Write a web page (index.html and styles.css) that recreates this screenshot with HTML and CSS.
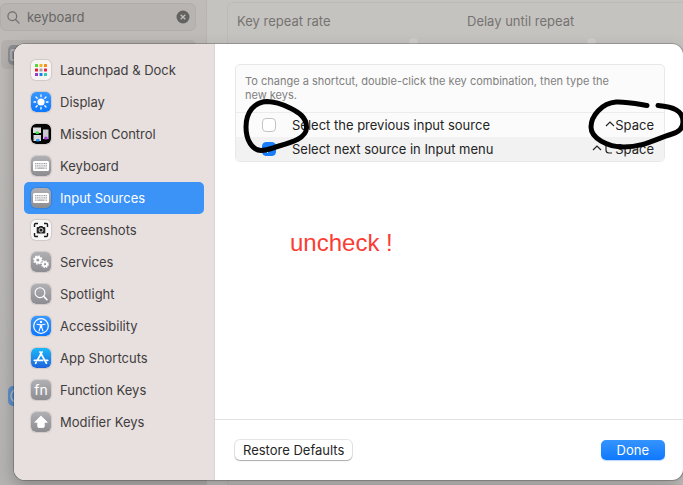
FILE: index.html
```html
<!DOCTYPE html>
<html lang="en">
<head>
<meta charset="utf-8">
<title>Keyboard Shortcuts</title>
<link rel="stylesheet" href="styles.css">
</head>
<body>
<div class="window">
  <aside class="back-side">
    <div class="search">
      <svg class="search-glass" viewBox="0 0 14 14" aria-hidden="true"><circle cx="5.7" cy="5.7" r="4.7"/><path d="M9.2 9.2 13 13"/></svg>
      <input class="search-field" type="text" value="keyboard" aria-label="Search">
      <button class="search-clear" type="button" aria-label="Clear search">
        <svg viewBox="0 0 14 14" aria-hidden="true"><circle cx="7" cy="7" r="6.5"/><path d="M4.7 4.7l4.6 4.6M9.3 4.7 4.7 9.3"/></svg>
      </button>
    </div>
    <div class="back-row"><svg class="back-icon" viewBox="0 0 20 20" aria-hidden="true"><rect class="dim-gray" width="20" height="20" rx="5"/><rect class="dim-line" x="3" y="5" width="14" height="10" rx="1"/></svg></div>
    <div class="back-other"><svg class="back-icon" viewBox="0 0 20 20" aria-hidden="true"><rect class="dim-blue" width="20" height="20" rx="5"/><circle class="dim-line" cx="10" cy="10" r="7"/></svg></div>
  </aside>
  <div class="back-main">
    <div class="back-card">
      <div class="rate"><span>Key repeat rate</span><i class="knob"></i></div>
      <div class="rate"><span>Delay until repeat</span><i class="knob"></i></div>
    </div>
  </div>

  <section class="sheet" role="dialog" aria-label="Keyboard shortcuts">
    <nav class="nav">
      <a class="nav-item" href="#launchpad">
        <svg class="icon" viewBox="0 0 20 20" aria-hidden="true"><rect width="20" height="20" rx="5" fill="#f7f5f3"/>
          <rect x="4" y="4" width="3" height="3" rx=".6" fill="#52d63c"/><rect x="8.5" y="4" width="3" height="3" rx=".6" fill="#f4b51c"/><rect x="13" y="4" width="3" height="3" rx=".6" fill="#f58a1f"/>
          <rect x="4" y="8.5" width="3" height="3" rx=".6" fill="#e5202e"/><rect x="8.5" y="8.5" width="3" height="3" rx=".6" fill="#a5a5a5"/><rect x="13" y="8.5" width="3" height="3" rx=".6" fill="#ed1f50"/>
          <rect x="4" y="13" width="3" height="3" rx=".6" fill="#9b35cf"/><rect x="8.5" y="13" width="3" height="3" rx=".6" fill="#187ff0"/><rect x="13" y="13" width="3" height="3" rx=".6" fill="#32c9ad"/></svg>
        Launchpad &amp; Dock</a>
      <a class="nav-item" href="#display">
        <svg class="icon" viewBox="0 0 20 20" aria-hidden="true"><rect width="20" height="20" rx="5" fill="url(#blue)"/><circle cx="10" cy="10" r="3.6" fill="#fff"/>
          <path d="M10 3v1.6M10 15.4V17M3 10h1.6M15.4 10H17M5 5l1.2 1.2M13.8 13.8 15 15M5 15l1.2-1.2M13.8 6.2 15 5" stroke="#fff" stroke-width="1.3" stroke-linecap="round"/></svg>
        Display</a>
      <a class="nav-item" href="#mission">
        <svg class="icon" viewBox="0 0 20 20" aria-hidden="true"><rect width="20" height="20" rx="5" fill="#050505"/>
          <rect x="2" y="3.5" width="8" height="5.5" fill="#dcdcdc"/><rect x="2.5" y="11" width="7.5" height="6" fill="#d8d8dc"/><rect x="12" y="5.5" width="5.5" height="9.5" fill="#c9c5cc"/>
          <rect x="4.5" y="7.5" width="3.5" height="2.5" rx="1" fill="#37e83b"/><rect x="5" y="15" width="3.5" height="2.6" rx="1" fill="#279cfa"/><rect x="13.2" y="12.8" width="3.4" height="2.6" rx="1" fill="#a43bd8"/></svg>
        Mission Control</a>
      <a class="nav-item" href="#keyboard">
        <svg class="icon" viewBox="0 0 20 20" aria-hidden="true"><rect width="20" height="20" rx="5" fill="url(#gray)"/><use href="#keys"/></svg>
        Keyboard</a>
      <a class="nav-item selected" href="#input" aria-current="page">
        <svg class="icon" viewBox="0 0 20 20" aria-hidden="true"><rect width="20" height="20" rx="5" fill="url(#gray)"/><use href="#keys"/></svg>
        Input Sources</a>
      <a class="nav-item" href="#screenshots">
        <svg class="icon" viewBox="0 0 20 20" aria-hidden="true"><rect width="20" height="20" rx="5" fill="#f8f8f8"/>
          <path d="M3.5 7V4.5a1 1 0 0 1 1-1H7M13 3.5h2.5a1 1 0 0 1 1 1V7M16.5 13v2.5a1 1 0 0 1-1 1H13M7 16.5H4.5a1 1 0 0 1-1-1V13" fill="none" stroke="#1d1d1d" stroke-width="1.4"/>
          <path d="M6.5 7h1.4l.7-1h2.8l.7 1h1.4q.8 0 .8.8v4.9q0 .8-.8.8h-7q-.8 0-.8-.8V7.8q0-.8.8-.8z" fill="#222"/><circle cx="10" cy="10.1" r="2" fill="#222" stroke="#e6e6e6" stroke-width=".9"/></svg>
        Screenshots</a>
      <a class="nav-item" href="#services">
        <svg class="icon" viewBox="0 0 20 20" aria-hidden="true"><rect width="20" height="20" rx="5" fill="url(#gray)"/>
          <g fill="none" stroke="#fff"><circle cx="6.8" cy="8" r="2.6" stroke-width="2.1"/><circle cx="6.8" cy="8" r="4" stroke-width="1.4" stroke-dasharray="1.57 1.57"/>
          <circle cx="14" cy="12.2" r="2.1" stroke-width="1.9"/><circle cx="14" cy="12.2" r="3.3" stroke-width="1.3" stroke-dasharray="1.3 1.3"/></g></svg>
        Services</a>
      <a class="nav-item" href="#spotlight">
        <svg class="icon" viewBox="0 0 20 20" aria-hidden="true"><rect width="20" height="20" rx="5" fill="url(#gray)"/><g fill="none" stroke="#fff" stroke-linecap="round"><circle cx="9" cy="8.7" r="4.9" stroke-width="1.1"/><path d="M12.7 12.4 16 15.7" stroke-width="1.5"/></g></svg>
        Spotlight</a>
      <a class="nav-item" href="#accessibility">
        <svg class="icon" viewBox="0 0 20 20" aria-hidden="true"><rect width="20" height="20" rx="5" fill="url(#blue)"/><circle cx="10" cy="10" r="7.3" fill="none" stroke="#fff" stroke-width="1.2"/><circle cx="10" cy="5.9" r="1.2" fill="#fff"/>
          <path d="M6 8.2l3 .5h2l3-.5M9.3 8.7v2.8L8 15M10.7 8.7v2.8L12 15M10 8.5v3" fill="none" stroke="#fff" stroke-width="1.1" stroke-linecap="round"/></svg>
        Accessibility</a>
      <a class="nav-item" href="#apps">
        <svg class="icon" viewBox="0 0 20 20" aria-hidden="true"><rect width="20" height="20" rx="5" fill="url(#store)"/><path d="M11.1 4 6.3 12.3M9 4l5.8 10.2M3.3 12.3h8.4M14 12.3h2.7M5.2 14.3l-.6 1M14.8 14.2l.6 1" fill="none" stroke="#fff" stroke-width="1.7" stroke-linecap="round"/></svg>
        App Shortcuts</a>
      <a class="nav-item" href="#function">
        <span class="icon fn" aria-hidden="true">fn</span>
        Function Keys</a>
      <a class="nav-item" href="#modifier">
        <svg class="icon" viewBox="0 0 20 20" aria-hidden="true"><rect width="20" height="20" rx="5" fill="url(#gray)"/><path d="M10 3.9 16.3 10.3h-3v4.2q0 1-1 1H7.7q-1 0-1-1v-4.2h-3z" fill="#fff" stroke="#fff" stroke-width=".8" stroke-linejoin="round"/></svg>
        Modifier Keys</a>
    </nav>

    <div class="pane">
      <div class="content">
        <div class="card">
          <p class="hint">To change a shortcut, double-click the key combination, then type the new keys.</p>
          <table class="shortcuts">
            <tr>
              <td class="tick"><input type="checkbox" id="prev"></td>
              <td><label for="prev">Select the previous input source</label></td>
              <td class="combo"><svg class="ctrl" viewBox="0 0 10 10" aria-hidden="true"><path d="M1 6 5 2l4 4"/></svg>Space</td>
            </tr>
            <tr>
              <td class="tick"><input type="checkbox" id="next" checked></td>
              <td><label for="next">Select next source in Input menu</label></td>
              <td class="combo"><svg class="ctrl" viewBox="0 0 10 10" aria-hidden="true"><path d="M1 6 5 2l4 4"/></svg><svg class="opt" viewBox="0 0 10 10" aria-hidden="true"><path d="M1 2v4q0 3 3 3h3"/></svg>Space</td>
            </tr>
          </table>
          <svg class="ink ink-left" viewBox="0 0 75 60" aria-hidden="true"><path d="M27 6.5C14 7 6 17 6 32c0 13 6 23 15 23.5 7 0 10-2 18-4.5 14-4 27-8 27.5-18C67 22 58 17 50 13 42 9 35 6.5 27 6.5z"/></svg>
          <svg class="ink ink-right" viewBox="0 0 100 60" aria-hidden="true"><path d="M64 10.5C55 9 43 6.5 33 7 19 8 8 21 8 32c0 11 16 20 33 20 20 0 31-8 48-13 7-2 11-6 11-12 0-12-10-15-25-16.5"/></svg>
        </div>
        <p class="note">uncheck !</p>
      </div>
      <footer class="actions">
        <button class="btn" type="button">Restore Defaults</button>
        <button class="btn primary" type="button">Done</button>
      </footer>
    </div>
  </section>
</div>
<svg class="defs" aria-hidden="true">
  <defs>
    <linearGradient id="blue" x2="0" y2="1"><stop stop-color="#3998ff"/><stop offset="1" stop-color="#0c78fd"/></linearGradient>
    <linearGradient id="gray" x2="0" y2="1"><stop stop-color="#b0afb3"/><stop offset="1" stop-color="#8d8c91"/></linearGradient>
    <linearGradient id="store" x2="0" y2="1"><stop stop-color="#1cb8f8"/><stop offset="1" stop-color="#1d63df"/></linearGradient>
    <g id="keys"><rect x="2" y="5" width="16" height="10" rx="1.5" fill="#fff"/><path d="M4 7.7h12M4 9.9h12" stroke="#a5a5a8" stroke-width="1.3" stroke-dasharray="1.3 .5"/><path d="M4 12.2h1.5M6.3 12.2h7.4M14.5 12.2H16" stroke="#a5a5a8" stroke-width="1.3"/></g>
  </defs>
</svg>
</body>
</html>
```
FILE: styles.css
```css
* { box-sizing: border-box; }

body {
  margin: 0;
  font: 13px/16px Inter, "Liberation Sans", sans-serif;
  color: #242424;
}

button, input { font: inherit; }

.defs { position: absolute; width: 0; height: 0; }

/* Dimmed window behind the sheet */
.window {
  position: relative;
  display: flex;
  min-height: 100vh;
  overflow: hidden;
  background: #c5c3c0;
  color: #757371;
}

.back-side {
  flex: 0 0 207px;
  min-width: 0;
  display: flex;
  flex-direction: column;
  padding: 3px 10px 0 0;
  background: linear-gradient(#bebbb9, #b5b3b1);
  border-right: 1px solid #b6b4b1;
}

.search {
  display: flex;
  align-items: center;
  gap: 7px;
  height: 28px;
  padding: 0 5px 0 6px;
  border: 1px solid #b0adab;
  border-radius: 6px;
  background: #b7b4b2;
}

.search-glass {
  flex: none;
  width: 13px;
  height: 13px;
  fill: none;
  stroke: #706e6c;
  stroke-width: 1.3;
  stroke-linecap: round;
}

.search-field {
  flex: 1;
  min-width: 0;
  padding: 0;
  border: 0;
  outline: 0;
  background: none;
  color: #686664;
}

.search-clear {
  width: 14px;
  height: 14px;
  padding: 0;
  border: 0;
  background: none;
}

.search-clear svg { display: block; fill: #646260; stroke: #c0bdbb; stroke-width: 1.3; }
.search-clear circle { stroke: none; }

.back-row {
  height: 29px;
  margin: 9px 0 0 1px;
  padding: 5px 7px;
  border-radius: 5px;
  background: #b2afad;
}

.back-other { margin: 317px 0 0 8px; }

.back-icon { display: block; width: 20px; height: 20px; }
.dim-gray { fill: #8d8d90; }
.dim-blue { fill: #5c8fc8; }
.dim-line { fill: none; stroke: #b9bdc1; stroke-width: 1.3; }

.back-main { flex: 1; padding: 2px 0 0 20px; }

.back-card {
  display: grid;
  grid-template-columns: 230px 1fr;
  height: 100%;
  padding: 10px 0 0 9px;
  border: 1px solid #bdbbb8;
  border-right: 0;
  border-radius: 6px 0 0 0;
}

.rate { display: flex; flex-direction: column; gap: 9px; }

.knob {
  width: 9px;
  height: 9px;
  margin-left: 172px;
  border-radius: 50%;
  background: #cfcdca;
}

.rate + .rate .knob { margin-left: 120px; }

/* Sheet */
.sheet {
  position: absolute;
  inset: 44px 0 5px 14px;
  display: flex;
  border-radius: 11px;
  background: #fff;
  color: #242424;
  box-shadow: 0 0 0 1px rgba(0, 0, 0, .2), 0 6px 16px rgba(0, 0, 0, .25);
}

.nav {
  flex: 0 0 201px;
  padding: 10px;
  border-right: 1px solid #dcd3d2;
  border-radius: 11px 0 0 11px;
  background: #e8e0df;
}

.nav-item {
  display: flex;
  align-items: center;
  gap: 9px;
  height: 32px;
  padding: 0 7px;
  border-radius: 5px;
  color: #403d3d;
  text-decoration: none;
}

.nav-item.selected { background: #3b93f7; color: #fff; }

.icon {
  flex: none;
  width: 20px;
  height: 20px;
  border-radius: 5px;
  box-shadow: 0 0 1px 1px rgba(0, 0, 0, .1);
}

.fn {
  background: linear-gradient(#b0afb3, #8d8c91);
  color: #fff;
  font-size: 14px;
  line-height: 19px;
  text-align: center;
}

.pane { flex: 1; min-width: 0; display: flex; flex-direction: column; }

.content { flex: 1; padding: 20px 18px 0 20px; }

.card {
  position: relative;
  border: 1px solid #e8e8e8;
  border-radius: 5px;
  background: #fbfbfb;
}

.hint {
  margin: 0;
  padding: 9px 40px 10px 9px;
  border-bottom: 1px solid #ececec;
  color: #808080;
  font-size: 11px;
  line-height: 14px;
}

.shortcuts { width: 100%; border-collapse: collapse; }
.shortcuts tr { height: 24px; }
.shortcuts tr:nth-child(even) { background: #f2f2f2; }
.shortcuts td { padding: 0; }
.shortcuts .tick { width: 56px; padding-left: 26px; }
.shortcuts .combo { padding-right: 10px; text-align: right; white-space: nowrap; }

.tick input {
  display: block;
  width: 14px;
  height: 14px;
  margin: 0;
  appearance: none;
  border: 1px solid #c4c4c4;
  border-radius: 4px;
  background: #fff;
}

.tick input:checked {
  border-color: #1a7ef8;
  background: linear-gradient(135deg, transparent 45%, #fff 45% 58%, transparent 58%) 4px 4px / 5px 6px no-repeat #1a7ef8;
}

.ctrl, .opt { width: 10px; height: 10px; fill: none; stroke: currentColor; stroke-width: 1.2; }
.opt { margin-left: 3px; }

/* Hand-drawn marks over the card */
.ink {
  position: absolute;
  top: 30px;
  height: 60px;
  fill: none;
  stroke: #000;
  stroke-width: 5;
  stroke-linecap: round;
  stroke-linejoin: round;
  pointer-events: none;
}

.ink-left { left: 4px; width: 75px; }
.ink-right { right: -19px; width: 100px; }

.note {
  margin: 67px 0 0 55px;
  color: #fb3c35;
  font: 24px/28px "Liberation Sans", sans-serif;
}

.actions {
  display: flex;
  align-items: center;
  justify-content: space-between;
  height: 61px;
  padding: 0 18px 0 20px;
  border-top: 1px solid #e2e2e2;
}

.btn {
  height: 20px;
  padding: 0 8px;
  border: 0;
  border-radius: 5px;
  background: #fff;
  color: #242424;
  line-height: 20px;
  box-shadow: 0 0 0 1px rgba(0, 0, 0, .1), 0 1px 1px rgba(0, 0, 0, .25);
}

.btn.primary {
  padding: 0 16px;
  background: linear-gradient(#3494ff, #0f78fc);
  color: #fff;
  box-shadow: 0 1px 1px rgba(20, 120, 250, .3);
}
```
